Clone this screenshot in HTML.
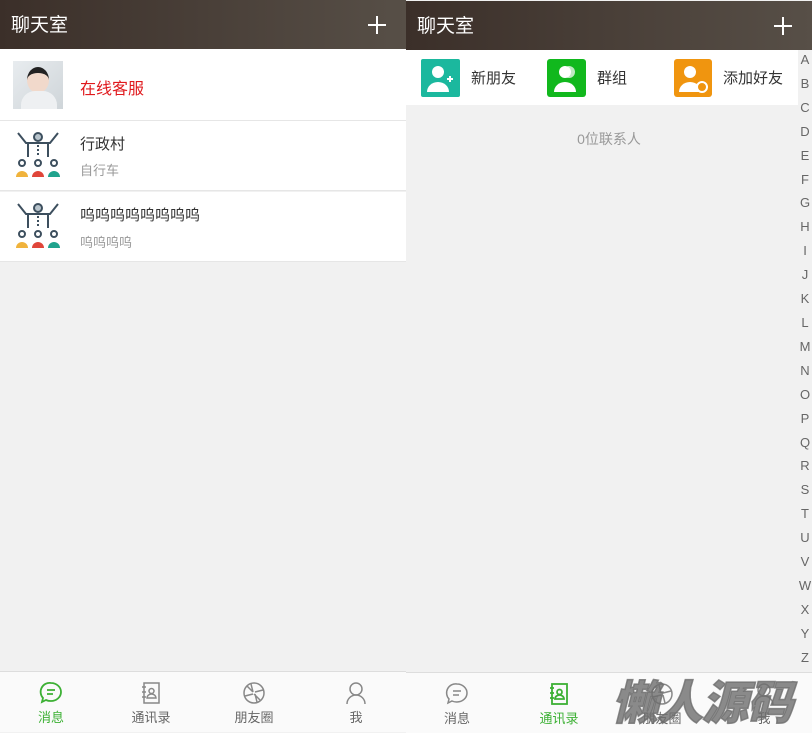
<!DOCTYPE html>
<html><head><meta charset="utf-8"><style>
*{margin:0;padding:0;box-sizing:border-box}
body{width:812px;height:732px;background:#f1f1f1;font-family:"Liberation Sans","Noto Sans CJK SC",sans-serif;position:relative;overflow:hidden}
.p{position:absolute;top:0;width:406px;height:732px;background:#f1f1f1}
.hd{position:absolute;left:0;width:406px;height:49px;background:linear-gradient(90deg,#3b2f29,#574f47);color:#fff;font-size:19px}
.hd span{position:absolute;left:11px;top:10px}
.hd i{position:absolute;right:20px;top:16px;width:18px;height:18px}
.hd i:before{content:"";position:absolute;left:8px;top:0;width:2px;height:18px;background:#fff}
.hd i:after{content:"";position:absolute;left:0;top:8px;width:18px;height:2px;background:#fff}
.row{position:absolute;left:0;width:406px;height:70px;background:#fff;border-bottom:1px solid #e6e6e6}
.t1{position:absolute;left:80px;font-size:15px;color:#333}
.t2{position:absolute;left:80px;font-size:13px;color:#999}
.nav{position:absolute;left:0;top:671px;width:406px;height:61px;background:#fafafa;border-top:1px solid #ddd}
.ni{position:absolute;top:0;width:102px;text-align:center;font-size:13px;color:#666}
.ni svg{display:block;margin:9px auto 0}
.ni div{margin-top:2px}
.az{position:absolute;left:798px;width:14px;text-align:center;font-size:13px;color:#666}
</style></head><body>
<div class="p" style="left:0">
<div class="hd" style="top:0"><span>聊天室</span><i></i></div>
<div class="row" style="top:49px;height:72px">
<div style="position:absolute;left:13px;top:12px;width:50px;height:48px;background:linear-gradient(135deg,#e8ecef,#cfd5d9)">
<div style="position:absolute;left:14px;top:6px;width:22px;height:26px;border-radius:50%;background:#f1d9cb;border-top:6px solid #222"></div>
<div style="position:absolute;left:8px;top:30px;width:36px;height:18px;border-radius:14px 14px 0 0;background:#eef0f2"></div></div>
<div class="t1" style="top:26px;color:#e0191d;font-size:16px">在线客服</div></div>
<div class="row" style="top:121px">
<svg style="position:absolute;left:14px;top:10px" width="48" height="48" viewBox="0 0 48 48"><g fill="none" stroke="#3d4f5e" stroke-width="2"><circle cx="24" cy="6" r="4" fill="#b8c4cc"/><path d="M4 2l8 10h24l8-10M14 12v14M34 12v14"/><path d="M24 14v12" stroke-dasharray="2 2"/><circle cx="8" cy="32" r="3"/><circle cx="24" cy="32" r="3"/><circle cx="40" cy="32" r="3"/></g><path d="M2 46a6 6 0 0112 0z" fill="#f0b33c"/><path d="M18 46a6 6 0 0112 0z" fill="#e0463a"/><path d="M34 46a6 6 0 0112 0z" fill="#1fa38d"/></svg>
<div class="t1" style="top:12px">行政村</div><div class="t2" style="top:39px">自行车</div></div>
<div class="row" style="top:192px">
<svg style="position:absolute;left:14px;top:10px" width="48" height="48" viewBox="0 0 48 48"><g fill="none" stroke="#3d4f5e" stroke-width="2"><circle cx="24" cy="6" r="4" fill="#b8c4cc"/><path d="M4 2l8 10h24l8-10M14 12v14M34 12v14"/><path d="M24 14v12" stroke-dasharray="2 2"/><circle cx="8" cy="32" r="3"/><circle cx="24" cy="32" r="3"/><circle cx="40" cy="32" r="3"/></g><path d="M2 46a6 6 0 0112 0z" fill="#f0b33c"/><path d="M18 46a6 6 0 0112 0z" fill="#e0463a"/><path d="M34 46a6 6 0 0112 0z" fill="#1fa38d"/></svg>
<div class="t1" style="top:12px">呜呜呜呜呜呜呜呜</div><div class="t2" style="top:40px">呜呜呜呜</div></div>
<div class="nav">
<div class="ni" style="left:0;color:#3cb034"><svg width="24" height="24" viewBox="0 0 24 24" fill="none" stroke="#3cb034" stroke-width="1.8"><path d="M12 2a10 9 0 110 18 11 11 0 01-5-1l-4 2 1-4A9 9 0 0112 2z"/><path d="M8 9h8M8 13h6"/></svg><div>消息</div></div>
<div class="ni" style="left:100px"><svg width="24" height="24" viewBox="0 0 24 24" fill="none" stroke="#888" stroke-width="1.5"><rect x="5" y="2" width="15" height="20"/><path d="M3 6h4M3 11h4M3 16h4"/><circle cx="12.5" cy="10" r="2.5"/><path d="M8 17a4.5 4 0 019 0z"/></svg><div>通讯录</div></div>
<div class="ni" style="left:203px"><svg width="24" height="24" viewBox="0 0 24 24" fill="none" stroke="#888" stroke-width="1.5"><circle cx="12" cy="12" r="10"/><path d="M9 3l2 8M21 9l-8 2M15 21l-2-8M3 15l8-2M18 19l-6-6M5 5l6 6"/></svg><div>朋友圈</div></div>
<div class="ni" style="left:305px"><svg width="24" height="24" viewBox="0 0 24 24" fill="none" stroke="#888" stroke-width="1.5"><circle cx="12" cy="8" r="6"/><path d="M3 23a9 9 0 0118 0"/></svg><div>我</div></div>
</div></div>
<div class="p" style="left:406px">
<div class="hd" style="top:1px"><span>聊天室</span><i></i></div>
<div style="position:absolute;left:0;top:50px;width:392px;height:55px;background:#fff"></div>
<div style="position:absolute;left:15px;top:59px;width:39px;height:38px;background:#1bb89e;border-radius:2px"></div>
<svg style="position:absolute;left:20px;top:62px" width="30" height="32" viewBox="0 0 30 32"><circle cx="12" cy="10" r="6" fill="#fff"/><path d="M1 30a11 10 0 0122 0z" fill="#fff"/><path d="M24 14v6M21 17h6" stroke="#fff" stroke-width="2"/></svg>
<div style="position:absolute;left:65px;top:67px;font-size:15px;color:#333">新朋友</div>
<div style="position:absolute;left:141px;top:59px;width:39px;height:38px;background:#11b81d;border-radius:3px"></div>
<svg style="position:absolute;left:146px;top:62px" width="30" height="32" viewBox="0 0 30 32"><circle cx="17" cy="10" r="6" fill="#bfe9c2"/><circle cx="13" cy="10" r="6" fill="#fff"/><path d="M2 30a11 10 0 0122 0z" fill="#fff"/></svg>
<div style="position:absolute;left:191px;top:67px;font-size:15px;color:#333">群组</div>
<div style="position:absolute;left:268px;top:59px;width:38px;height:38px;background:#f0950f;border-radius:3px"></div>
<svg style="position:absolute;left:272px;top:62px" width="30" height="32" viewBox="0 0 30 32"><circle cx="12" cy="10" r="6" fill="#fff"/><path d="M1 30a11 10 0 0122 0z" fill="#fff"/><circle cx="24" cy="25" r="5" fill="#f0950f" stroke="#fff" stroke-width="2"/></svg>
<div style="position:absolute;left:317px;top:67px;font-size:15px;color:#333">添加好友</div>
<div style="position:absolute;left:0;width:406px;top:129px;text-align:center;font-size:14px;color:#999">0位联系人</div>
<div class="nav" style="top:672px">
<div class="ni" style="left:0"><svg width="24" height="24" viewBox="0 0 24 24" fill="none" stroke="#888" stroke-width="1.5"><path d="M12 2a10 9 0 110 18 11 11 0 01-5-1l-4 2 1-4A9 9 0 0112 2z"/><path d="M8 9h8M8 13h6"/></svg><div>消息</div></div>
<div class="ni" style="left:102px;color:#3cb034"><svg width="24" height="24" viewBox="0 0 24 24" fill="none" stroke="#3cb034" stroke-width="1.8"><rect x="5" y="2" width="15" height="20"/><path d="M3 6h4M3 11h4M3 16h4"/><circle cx="12.5" cy="10" r="2.5"/><path d="M8 17a4.5 4 0 019 0z"/></svg><div>通讯录</div></div>
<div class="ni" style="left:205px"><svg width="24" height="24" viewBox="0 0 24 24" fill="none" stroke="#888" stroke-width="1.5"><circle cx="12" cy="12" r="10"/><path d="M9 3l2 8M21 9l-8 2M15 21l-2-8M3 15l8-2"/></svg><div>朋友圈</div></div>
<div class="ni" style="left:307px"><svg width="24" height="24" viewBox="0 0 24 24" fill="none" stroke="#888" stroke-width="1.5"><circle cx="12" cy="8" r="6"/><path d="M3 23a9 9 0 0118 0"/></svg><div>我</div></div>
<div style="position:absolute;left:206px;top:-6px;font-size:46px;font-weight:900;font-style:italic;color:rgba(110,110,110,0.8);letter-spacing:-1px;-webkit-text-stroke:1.5px rgba(110,110,110,0.8)">懒人源码</div>
</div></div>
<div class="az" style="top:48px;line-height:23.9px">A<br>B<br>C<br>D<br>E<br>F<br>G<br>H<br>I<br>J<br>K<br>L<br>M<br>N<br>O<br>P<br>Q<br>R<br>S<br>T<br>U<br>V<br>W<br>X<br>Y<br>Z</div>
</body></html>
